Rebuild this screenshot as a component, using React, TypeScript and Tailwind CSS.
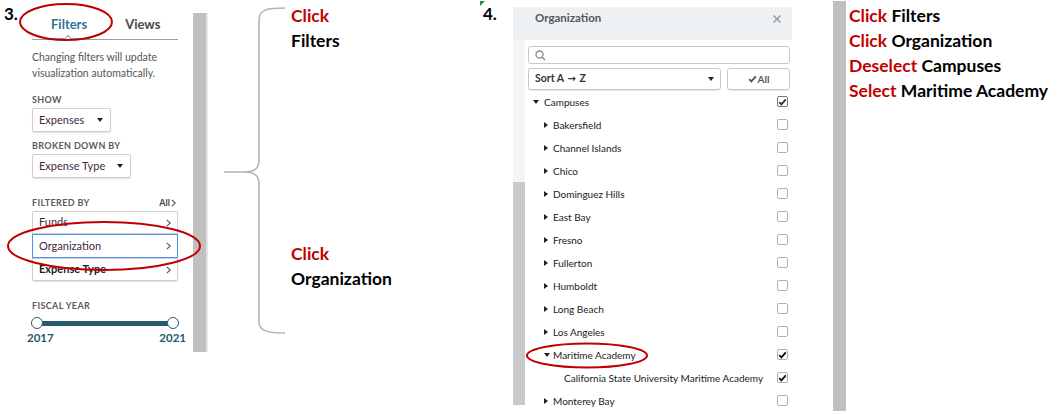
import React from "react";

const Chevron = ({ className = "" }: { className?: string }) => (
  <svg width="5" height="8" viewBox="0 0 5 8" className={className}>
    <polyline points="0.8,0.8 4.2,4 0.8,7.2" fill="none" stroke="#555" strokeWidth="1.1" />
  </svg>
);

const DownTri = () => (
  <svg width="6" height="4" viewBox="0 0 6 4">
    <polygon points="0,0 6,0 3,4" fill="#222" />
  </svg>
);

const RightTri = () => (
  <svg width="4" height="6" viewBox="0 0 4 6">
    <polygon points="0,0 4,3 0,6" fill="#222" />
  </svg>
);

const Check = ({ color = "#111" }: { color?: string }) => (
  <svg width="9" height="8" viewBox="0 0 9 8">
    <polyline points="1.2,4.2 3.4,6.4 7.8,1.4" fill="none" stroke={color} strokeWidth="1.8" />
  </svg>
);

type Row = { label: string; level: 0 | 1 | 2; open?: boolean; check?: "partial" | "checked" };

const rows: Row[] = [
  { label: "Campuses", level: 0, open: true, check: "partial" },
  { label: "Bakersfield", level: 1 },
  { label: "Channel Islands", level: 1 },
  { label: "Chico", level: 1 },
  { label: "Dominguez Hills", level: 1 },
  { label: "East Bay", level: 1 },
  { label: "Fresno", level: 1 },
  { label: "Fullerton", level: 1 },
  { label: "Humboldt", level: 1 },
  { label: "Long Beach", level: 1 },
  { label: "Los Angeles", level: 1 },
  { label: "Maritime Academy", level: 1, open: true, check: "checked" },
  { label: "California State University Maritime Academy", level: 2, check: "checked" },
  { label: "Monterey Bay", level: 1 },
];

function TreeRow({ r }: { r: Row }) {
  const pad = r.level === 0 ? "pl-[5px]" : r.level === 1 ? "pl-[16px]" : "pl-[36px]";
  return (
    <div className={`flex items-center h-[23px] shrink-0 ${pad}`}>
      {r.level !== 2 && (
        <div className={`flex items-center ${r.level === 0 ? "w-[11px]" : "w-[9px]"}`}>
          {r.open ? <DownTri /> : <RightTri />}
        </div>
      )}
      <span className="text-[10px] leading-[12px] text-[#1a1a1a]">{r.label}</span>
      <div
        className={`ml-auto mr-[2px] w-[11px] h-[11px] rounded-[2px] border flex items-center justify-center ${
          r.check === "partial" ? "border-[#777]" : "border-[#b0b0b0]"
        }`}
      >
        {r.check === "checked" && <Check />}
        {r.check === "partial" && <Check color="#333" />}
      </div>
    </div>
  );
}

const Label = ({ children, className = "" }: { children: React.ReactNode; className?: string }) => (
  <div className={`text-[9px] leading-[12px] font-bold tracking-[0.04em] text-[#5b5b5b] ${className}`}>{children}</div>
);

export default function App() {
  return (
    <div
      className="relative w-[1061px] h-[414px] bg-white flex overflow-hidden"
      style={{ fontFamily: "Lato, 'Open Sans', sans-serif" }}
    >
      {/* Section 3 */}
      <div className="flex shrink-0">
        <div className="w-[32px] pl-[4px] pt-[4px] text-[17px] leading-[20px] font-bold text-black">3.</div>
        <div className="w-[146px] flex flex-col">
          {/* tabs */}
          <div className="relative mt-[14px] h-[26px] border-b border-[#a0a0a0] flex items-start pt-[2px]">
            <span className="ml-[19px] text-[13px] leading-[16px] font-bold text-[#2d7392]">Filters</span>
            <span className="ml-[38px] text-[13px] leading-[16px] font-bold text-[#4a4a4a]">Views</span>
            <div className="absolute left-[15px] bottom-[-1px] w-[43px] h-[2px] bg-[#6ea6bf]" />
            <div className="absolute left-[33px] bottom-[0px] w-[6px] h-[6px] rotate-45 border-l border-t border-[#6ea6bf] bg-white translate-y-[3px]" />
          </div>
          <div className="mt-[9px] text-[10.5px] leading-[16px] text-[#555]">
            <div>Changing filters will update</div>
            <div>visualization automatically.</div>
          </div>
          <Label className="mt-[13px]">SHOW</Label>
          <div className="mt-[2px] w-[79px] h-[24px] border border-[#cfcfcf] rounded-[2px] shadow-[0_1px_1px_rgba(0,0,0,0.12)] flex items-center pl-[6px] pr-[7px] justify-between">
            <span className="text-[11px] text-[#45283f]">Expenses</span>
            <DownTri />
          </div>
          <Label className="mt-[8px]">BROKEN DOWN BY</Label>
          <div className="mt-[2px] w-[99px] h-[24px] border border-[#cfcfcf] rounded-[2px] shadow-[0_1px_1px_rgba(0,0,0,0.12)] flex items-center pl-[6px] pr-[7px] justify-between">
            <span className="text-[11px] text-[#45283f]">Expense Type</span>
            <DownTri />
          </div>
          <div className="mt-[19px] flex items-center justify-between">
            <Label>FILTERED BY</Label>
            <div className="flex items-center gap-[1px] mr-[2px]">
              <span className="text-[9px] leading-[12px] font-bold text-[#444]">All</span>
              <Chevron />
            </div>
          </div>
          <div className="mt-[2px] h-[23px] border border-[#cfcfcf] rounded-t-[2px] flex items-center justify-between pl-[6px] pr-[6px]">
            <span className="text-[11px] text-[#45283f]">Funds</span>
            <Chevron />
          </div>
          <div className="h-[24px] border border-[#4a96e0] flex items-center justify-between pl-[6px] pr-[6px]">
            <span className="text-[11px] text-[#45283f]">Organization</span>
            <Chevron />
          </div>
          <div className="h-[23px] border border-[#cfcfcf] rounded-b-[2px] shadow-[0_1px_1px_rgba(0,0,0,0.12)] flex items-center justify-between pl-[6px] pr-[6px]">
            <span className="text-[11px] font-bold text-[#222]">Expense Type</span>
            <Chevron />
          </div>
          <Label className="mt-[19px]">FISCAL YEAR</Label>
          <div className="mt-[5px] h-[12px] relative ml-[5px] w-[136px] flex items-center">
            <div className="w-full h-[5px] bg-[#265a6c]" />
            <div className="absolute left-[-6px] top-0 w-[12px] h-[12px] rounded-full bg-white border-[1.5px] border-[#265a6c]" />
            <div className="absolute right-[-6px] top-0 w-[12px] h-[12px] rounded-full bg-white border-[1.5px] border-[#265a6c]" />
          </div>
          <div className="mt-[3px] -ml-[5px] w-[159px] flex justify-between text-[11.5px] leading-[12px] font-bold text-[#1e5870]">
            <span>2017</span>
            <span>2021</span>
          </div>
        </div>
        <div className="w-[15px]" />
        <div className="mt-[13px] w-[13px] h-[339px] bg-[#c0c0c0]" />
        <div className="mt-[13px] w-[2px] h-[339px] bg-[#e4e4e4]" />
      </div>

      {/* Brace */}
      <div className="w-[80px] shrink-0">
        <svg width="80" height="340" viewBox="0 0 80 340">
          <path
            d="M77 8 C 60 8, 51 9, 51 20 L 51 160 C 51 169, 46 172, 36 172 L 16 172 L 36 172 C 46 172, 51 175, 51 184 L 51 322 C 51 331, 60 333, 77 333"
            fill="none"
            stroke="#b3b3b3"
            strokeWidth="1.6"
          />
        </svg>
      </div>

      {/* Text col 1 */}
      <div className="w-[192px] shrink-0 pl-[3px] pt-[3px] text-[17.5px] leading-[25px] font-bold">
        <div className="text-[#c00000]">Click</div>
        <div className="text-black">Filters</div>
        <div className="mt-[188px] text-[#c00000]">Click</div>
        <div className="text-black">Organization</div>
      </div>

      {/* Section 4 */}
      <div className="flex shrink-0">
        <div className="w-[33px] relative pl-[3px] pt-[4px] text-[17px] leading-[20px] font-bold text-black">
          <svg width="5" height="5" viewBox="0 0 5 5" className="absolute left-0 top-[1px]">
            <polygon points="0,0 5,0 0,5" fill="#2e8b3a" />
          </svg>
          4.
        </div>
        <div className="mt-[7px] w-[279px] h-[400px] flex flex-col overflow-hidden">
          <div className="h-[33px] shrink-0 bg-[#eef1f4] flex items-center justify-between pl-[22px] pr-[10px]">
            <span className="text-[11.5px] font-bold text-[#555] -mt-[11px]">Organization</span>
            <svg width="10" height="10" viewBox="0 0 10 10" className="-mt-[9px]">
              <path d="M1.5 1.5 L8.5 8.5 M8.5 1.5 L1.5 8.5" stroke="#9a9a9a" strokeWidth="1.5" />
            </svg>
          </div>
          <div className="flex flex-1 min-h-0">
            <div className="w-[12px] flex flex-col shrink-0">
              <div className="h-[142px] bg-[#f4f4f4]" />
              <div className="h-[223px] bg-[#c9c9c9]" />
            </div>
            <div className="ml-[3px] w-[262px] flex flex-col">
              <div className="mt-[6px] h-[18px] shrink-0 border border-[#c8c8c8] rounded-[3px] flex items-center pl-[6px]">
                <svg width="11" height="11" viewBox="0 0 11 11">
                  <circle cx="4.5" cy="4.5" r="3.5" fill="none" stroke="#8a8a8a" strokeWidth="1.3" />
                  <line x1="7" y1="7" x2="10" y2="10" stroke="#8a8a8a" strokeWidth="1.4" />
                </svg>
              </div>
              <div className="mt-[4px] h-[22px] shrink-0 flex gap-[6px]">
                <div className="w-[193px] border border-[#c8c8c8] rounded-[3px] shadow-[0_1px_1px_rgba(0,0,0,0.1)] flex items-center justify-between pl-[6px] pr-[6px]">
                  <span className="text-[10.5px] font-bold text-[#333]">
                    Sort A<span style={{ fontFamily: "'DejaVu Sans', sans-serif" }} className="text-[10px] font-bold"> → </span>Z
                  </span>
                  <DownTri />
                </div>
                <div className="w-[63px] border border-[#c8c8c8] rounded-[3px] shadow-[0_1px_1px_rgba(0,0,0,0.1)] flex items-center justify-center gap-[1px]">
                  <Check color="#555" />
                  <span className="text-[10px] font-bold text-[#555]">All</span>
                </div>
              </div>
              {rows.map((r) => (
                <TreeRow key={r.label} r={r} />
              ))}
            </div>
          </div>
        </div>
        <div className="w-[41px]" />
      </div>

      {/* Right gray bar */}
      <div className="mt-[1px] w-[13px] h-[410px] bg-[#c0c0c0] shrink-0" />

      {/* Text col 2 */}
      <div className="pl-[3px] pt-[3px] text-[17.5px] leading-[25px] font-bold whitespace-nowrap">
        <div>
          <span className="text-[#c00000]">Click</span> <span className="text-black">Filters</span>
        </div>
        <div>
          <span className="text-[#c00000]">Click</span> <span className="text-black">Organization</span>
        </div>
        <div>
          <span className="text-[#c00000]">Deselect</span> <span className="text-black">Campuses</span>
        </div>
        <div>
          <span className="text-[#c00000]">Select</span> <span className="text-black">Maritime Academy</span>
        </div>
      </div>

      {/* Red annotation ellipses */}
      <svg className="absolute left-0 top-0 pointer-events-none" width="1061" height="414" viewBox="0 0 1061 414">
        <ellipse cx="66" cy="22" rx="46" ry="18" fill="none" stroke="#c00000" strokeWidth="2" />
        <ellipse cx="104" cy="246" rx="96" ry="24" fill="none" stroke="#c00000" strokeWidth="2" />
        <ellipse cx="587" cy="355.5" rx="60" ry="12" fill="none" stroke="#c00000" strokeWidth="2" />
      </svg>
    </div>
  );
}
